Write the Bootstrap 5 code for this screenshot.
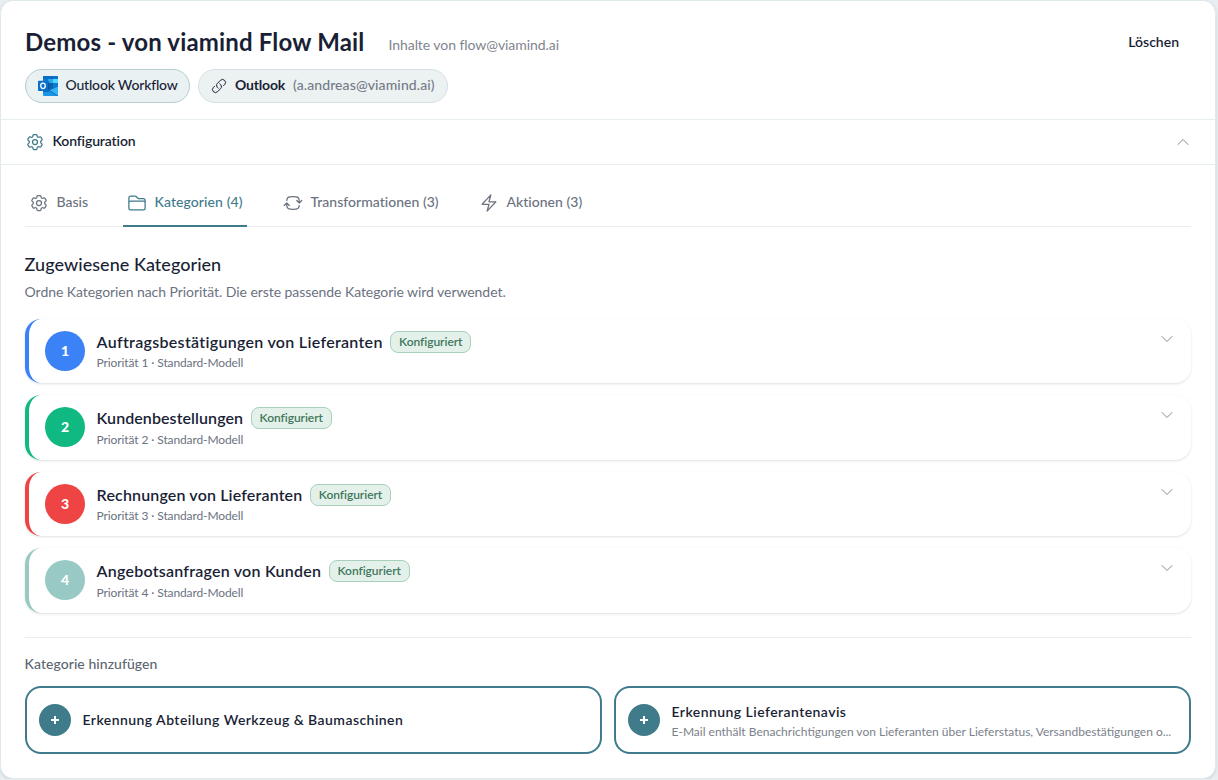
<!DOCTYPE html>
<html lang="de">
<head>
<meta charset="utf-8">
<meta name="viewport" content="width=device-width, initial-scale=1">
<title>Demos - von viamind Flow Mail</title>
<link href="https://cdn.jsdelivr.net/npm/bootstrap@5.3.0/dist/css/bootstrap.min.css" rel="stylesheet">
<style>
  :root { --ink: #1a1f36; --teal: #3f7b8b; --muted: #6b7280; --line: #e6eef0; }
  body { background: #e9eff1; color: var(--ink); font: 400 14px/20px Lato, "Noto Sans", sans-serif; overflow: hidden; }
  svg { flex: none; fill: none; stroke: currentColor; stroke-width: 1.5; stroke-linecap: round; stroke-linejoin: round; display: block; }
  .panel { width: 1216px; height: 779px; border: 1px solid #e0e9ec; border-radius: 13px; background: #fff; box-shadow: 0 1px 3px rgba(30,60,80,.15); }
  .panel-head { height: 119px; padding: 24px 24px 0; border-bottom: 1px solid var(--line); }
  .page-title { font-size: 24px; line-height: 34px; font-weight: 700; letter-spacing: .17px; }
  .origin { font-size: 14px; color: #7f848e; letter-spacing: -.06px; padding-top: 10px; margin-left: 24px; }
  .remove-link { color: var(--ink); font-weight: 600; margin: 7px 12px 0 0; }
  .chips { margin-top: 10px; }
  .chip { height: 34px; border-radius: 17px; padding: 0 12px; border: 1px solid #d5e1e3; background: #ecf2f2; font-weight: 500; white-space: nowrap; }
  .chip span { margin-top: -2px; }
  .chip-app { width: 165px; border-color: #b5ccd3; background: #e9f1f3; letter-spacing: -.19px; }
  .chip-app span { margin-left: -.5px; }
  .chip-link { width: 250px; }
  .chip-account { letter-spacing: -.19px; }
  .chip-mail { color: #747b87; letter-spacing: .1px; }
  .logo { stroke: none; }
  .config-row { height: 45px; padding: 0 24px; border-bottom: 1px solid var(--line); font-weight: 600; letter-spacing: -.13px; }
  .config-row span { margin: -2px 0 0 -.5px; }
  .tab-strip { margin: 0 24px; padding-top: 13px; height: 62px; border-bottom: 1px solid var(--line); gap: 32px; }
  .tab-item { height: 49px; padding: 0 4px; color: var(--muted); font-weight: 500; gap: 7.5px; border-bottom: 2px solid transparent; letter-spacing: .02px; white-space: nowrap; }
  .tab-item svg { margin-top: 2px; }
  .tab-item.current { color: var(--teal); border-color: var(--teal); letter-spacing: .09px; }
  .w-basis { width: 66px; } .w-cat { width: 124px; } .w-trans { width: 164px; }
  .section-title { font-size: 18px; line-height: 28px; font-weight: 500; letter-spacing: .04px; margin: 23px 0 4px -.4px; }
  .section-note { color: var(--muted); letter-spacing: -.058px; line-height: 20px; margin: 0 0 16.8px -.4px; }
  .gap-12 { gap: 12px; }
  .category { height: 64.5px; border-left: 4px solid var(--tone); border-radius: 16px; padding: 12px 16px; gap: 12px; box-shadow: 0 1px 3px rgba(0,0,0,.1), 0 1px 2px -1px rgba(0,0,0,.1); }
  .number { width: 40px; height: 40px; border-radius: 50%; background: var(--tone); color: #fff; font-size: 14px; font-weight: 900; }
  .blue { --tone: #3b82f6; --ls: .3px; } .green { --tone: #10b981; --ls: .08px; }
  .red { --tone: #ef4444; --ls: .155px; } .mint { --tone: #98c9c5; --ls: .23px; }
  .category-name { font-size: 16px; line-height: 22px; font-weight: 600; letter-spacing: var(--ls); margin-left: -.4px; }
  .state { height: 22px; width: 81px; border: 1px solid #a7d1bb; border-radius: 8px; background: #e4f1ea; color: #41775c; font-size: 12px; line-height: 20px; font-weight: 600; text-align: center; letter-spacing: -.05px; }
  .name-row { gap: 7.6px; }
  .meta { font-size: 12px; line-height: 16px; color: var(--muted); letter-spacing: -.11px; margin: 2.5px 0 0 -.4px; }
  .chevron { color: #858b95; }
  .add-area { margin-top: 24.2px; border-top: 1px solid #e9eff0; padding-top: 16px; }
  .add-label { color: #5d6672; font-weight: 500; letter-spacing: .05px; line-height: 20px; margin: 0 0 12px -.4px; }
  .add-card { flex: 1 1 0; min-width: 0; height: 68px; border: 2px solid var(--teal); border-radius: 16px; padding: 0 12px; gap: 11.5px; background: #fff; }
  .plus { width: 32px; height: 32px; border-radius: 50%; background: var(--teal); color: #fff; }
  .add-name { font-weight: 600; line-height: 20px; letter-spacing: .44px; }
  .add-text { padding-top: 2px; min-width: 0; }
  .add-desc { font-size: 12px; line-height: 16px; color: #7b818b; margin-top: 2px; }
</style>
</head>
<body>
<svg width="0" height="0" class="position-absolute">
  <defs>
    <symbol id="gear" viewBox="0 0 24 24"><path d="M9.594 3.94c.09-.542.56-.94 1.11-.94h2.593c.55 0 1.02.398 1.11.94l.213 1.281c.063.374.313.686.645.87.074.04.147.083.22.127.325.196.72.257 1.075.124l1.217-.456a1.125 1.125 0 0 1 1.37.49l1.296 2.247a1.125 1.125 0 0 1-.26 1.431l-1.003.827c-.293.241-.438.613-.43.992a7.723 7.723 0 0 1 0 .255c-.008.378.137.75.43.991l1.004.827c.424.35.534.955.26 1.43l-1.298 2.247a1.125 1.125 0 0 1-1.369.491l-1.217-.456c-.355-.133-.75-.072-1.076.124a6.47 6.47 0 0 1-.22.128c-.331.183-.581.495-.644.869l-.213 1.281c-.09.543-.56.94-1.11.94h-2.594c-.55 0-1.019-.398-1.11-.94l-.213-1.281c-.062-.374-.312-.686-.644-.87a6.52 6.52 0 0 1-.22-.127c-.325-.196-.72-.257-1.076-.124l-1.217.456a1.125 1.125 0 0 1-1.369-.49l-1.297-2.247a1.125 1.125 0 0 1 .26-1.431l1.004-.827c.292-.24.437-.613.43-.991a6.932 6.932 0 0 1 0-.255c.007-.38-.138-.751-.43-.992l-1.004-.827a1.125 1.125 0 0 1-.26-1.43l1.297-2.247a1.125 1.125 0 0 1 1.37-.491l1.216.456c.356.133.751.072 1.076-.124.072-.044.146-.086.22-.128.332-.183.582-.495.644-.869l.214-1.28Z"/><path d="M15 12a3 3 0 1 1-6 0 3 3 0 0 1 6 0Z"/></symbol>
    <symbol id="down" viewBox="0 0 24 24"><path d="m19.5 8.25-7.5 7.5-7.5-7.5"/></symbol>
    <symbol id="up" viewBox="0 0 24 24"><path d="m4.5 15.75 7.5-7.5 7.5 7.5"/></symbol>
    <symbol id="add" viewBox="0 0 16 16"><path d="M8 4v8M4 8h8" stroke-width="2" stroke-linecap="butt"/></symbol>
  </defs>
</svg>

<main class="panel">
  <header class="panel-head">
    <div class="d-flex align-items-start">
      <h1 class="page-title m-0">Demos - von viamind Flow Mail</h1>
      <span class="origin">Inhalte von flow@viamind.ai</span>
      <a class="remove-link ms-auto text-decoration-none" href="#">Löschen</a>
    </div>
    <div class="chips d-flex gap-2">
      <span class="chip chip-app d-flex align-items-center gap-2">
        <svg class="logo" width="20" height="20" viewBox="0 0 20 20">
          <rect x="5" width="15" height="17" rx=".8" fill="#0a64ad"/>
          <path d="M5 .8Q5 0 5.800 0H15v3H5z" fill="#0b6cc4"/><path d="M15 0h4.200Q20 0 20 .8V3h-5z" fill="#0c71cc"/>
          <path d="M5 3h5v4H5z" fill="#0f78d4"/><path d="M10 3h5v4h-5z" fill="#28a8ea"/><path d="M15 3h5v4h-5z" fill="#50d9ff"/>
          <path d="M15 7h5v4l-5 3z" fill="#0f78d4"/>
          <path d="M5 10l8 5 7-5v9q0 1-1 1H6q-1 0-1-1z" fill="#1a94e6"/>
          <path d="M20 11v8q0 .6-.5.9L11 14.200z" fill="#33b5f4"/>
          <path d="M11 14.200l8.700 5.600" stroke="#0d5aa5" stroke-width=".8"/>
          <path d="M11.200 5v9.500q0 1.500-1.500 1.500H5V5z" fill="#0a4f91" opacity=".6"/>
          <rect y="4.700" width="10" height="10.300" rx=".8" fill="#0a6fc9"/>
          <ellipse cx="5" cy="9.850" rx="2.300" ry="2.700" stroke="#fff" stroke-width="1.300"/>
        </svg>
        <span>Outlook Workflow</span>
      </span>
      <span class="chip chip-link d-flex align-items-center gap-2">
        <svg width="16" height="16" viewBox="0 0 24 24"><path d="M13.190 8.688a4.500 4.500 0 0 1 1.242 7.244l-4.500 4.500a4.500 4.500 0 0 1-6.364-6.364l1.757-1.757m13.350-.622 1.757-1.757a4.500 4.500 0 0 0-6.364-6.364l-4.500 4.500a4.500 4.500 0 0 0 1.242 7.244"/></svg>
        <span class="chip-account fw-bold">Outlook</span>
        <span class="chip-mail">(a.andreas@viamind.ai)</span>
      </span>
    </div>
  </header>

  <div class="config-row d-flex align-items-center gap-2">
    <svg width="20" height="20" style="color:var(--teal)"><use href="#gear"/></svg>
    <span>Konfiguration</span>
    <svg class="chevron ms-auto" width="16" height="16"><use href="#up"/></svg>
  </div>

  <nav class="tab-strip d-flex">
    <a class="tab-item w-basis d-flex align-items-center text-decoration-none" href="#"><svg width="20" height="20"><use href="#gear"/></svg>Basis</a>
    <a class="tab-item w-cat current d-flex align-items-center text-decoration-none" href="#"><svg width="20" height="20" viewBox="0 0 24 24"><path d="M2.250 12.750V12A2.250 2.250 0 0 1 4.500 9.750h15A2.250 2.250 0 0 1 21.750 12v.750m-8.690-6.440-2.120-2.120a1.500 1.500 0 0 0-1.061-.440H4.500A2.250 2.250 0 0 0 2.250 6v12a2.250 2.250 0 0 0 2.250 2.250h15A2.250 2.250 0 0 0 21.750 18V9a2.250 2.250 0 0 0-2.250-2.250h-5.379a1.500 1.500 0 0 1-1.060-.440Z"/></svg>Kategorien (4)</a>
    <a class="tab-item w-trans d-flex align-items-center text-decoration-none" href="#"><svg width="20" height="20" viewBox="0 0 24 24"><path d="M19.500 12c0-1.232-.046-2.453-.138-3.662a4.006 4.006 0 0 0-3.700-3.700 48.678 48.678 0 0 0-7.324 0 4.006 4.006 0 0 0-3.700 3.700c-.017.220-.032.441-.046.662M19.500 12l3-3m-3 3-3-3m-12 3c0 1.232.046 2.453.138 3.662a4.006 4.006 0 0 0 3.700 3.700 48.656 48.656 0 0 0 7.324 0 4.006 4.006 0 0 0 3.700-3.700c.017-.220.032-.441.046-.662M4.500 12l3 3m-3-3-3 3"/></svg>Transformationen (3)</a>
    <a class="tab-item d-flex align-items-center text-decoration-none" href="#"><svg width="20" height="20" viewBox="0 0 24 24"><path d="m3.750 13.500 10.500-11.250L12 10.500h8.250L9.750 21.750 12 13.500H3.750Z"/></svg>Aktionen (3)</a>
  </nav>

  <section class="px-4">
    <h2 class="section-title">Zugewiesene Kategorien</h2>
    <p class="section-note">Ordne Kategorien nach Priorität. Die erste passende Kategorie wird verwendet.</p>

    <div class="d-grid gap-12">
      <article class="category blue d-flex">
        <span class="number d-flex align-items-center justify-content-center">1</span>
        <div>
          <div class="name-row d-flex"><span class="category-name">Auftragsbestätigungen von Lieferanten</span><span class="state">Konfiguriert</span></div>
          <div class="meta">Priorität 1 · Standard-Modell</div>
        </div>
        <svg class="chevron ms-auto" width="16" height="16"><use href="#down"/></svg>
      </article>
      <article class="category green d-flex">
        <span class="number d-flex align-items-center justify-content-center">2</span>
        <div>
          <div class="name-row d-flex"><span class="category-name">Kundenbestellungen</span><span class="state">Konfiguriert</span></div>
          <div class="meta">Priorität 2 · Standard-Modell</div>
        </div>
        <svg class="chevron ms-auto" width="16" height="16"><use href="#down"/></svg>
      </article>
      <article class="category red d-flex">
        <span class="number d-flex align-items-center justify-content-center">3</span>
        <div>
          <div class="name-row d-flex"><span class="category-name">Rechnungen von Lieferanten</span><span class="state">Konfiguriert</span></div>
          <div class="meta">Priorität 3 · Standard-Modell</div>
        </div>
        <svg class="chevron ms-auto" width="16" height="16"><use href="#down"/></svg>
      </article>
      <article class="category mint d-flex">
        <span class="number d-flex align-items-center justify-content-center">4</span>
        <div>
          <div class="name-row d-flex"><span class="category-name">Angebotsanfragen von Kunden</span><span class="state">Konfiguriert</span></div>
          <div class="meta">Priorität 4 · Standard-Modell</div>
        </div>
        <svg class="chevron ms-auto" width="16" height="16"><use href="#down"/></svg>
      </article>
    </div>

    <div class="add-area">
      <div class="add-label">Kategorie hinzufügen</div>
      <div class="d-flex gap-12">
        <div class="add-card d-flex align-items-center">
          <span class="plus d-flex align-items-center justify-content-center flex-shrink-0"><svg width="16" height="16"><use href="#add"/></svg></span>
          <div class="add-name">Erkennung Abteilung Werkzeug &amp; Baumaschinen</div>
        </div>
        <div class="add-card d-flex align-items-center">
          <span class="plus d-flex align-items-center justify-content-center flex-shrink-0"><svg width="16" height="16"><use href="#add"/></svg></span>
          <div class="add-text">
            <div class="add-name">Erkennung Lieferantenavis</div>
            <div class="add-desc text-nowrap">E-Mail enthält Benachrichtigungen von Lieferanten über Lieferstatus, Versandbestätigungen o...</div>
          </div>
        </div>
      </div>
    </div>
  </section>
</main>
<script src="https://cdn.jsdelivr.net/npm/bootstrap@5.3.0/dist/js/bootstrap.bundle.min.js"></script>
</body>
</html>
